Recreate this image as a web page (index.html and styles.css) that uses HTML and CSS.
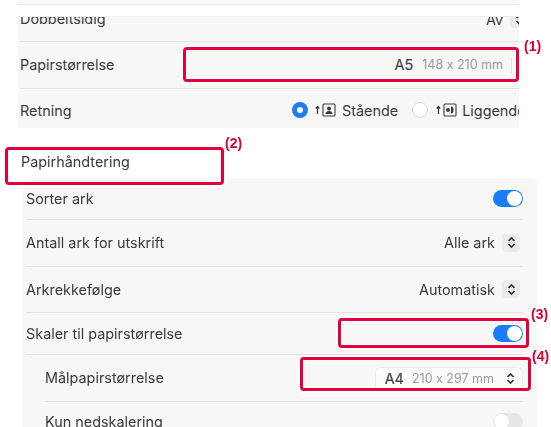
FILE: index.html
```html
<!DOCTYPE html>
<html lang="no">
<head>
  <meta charset="UTF-8" />
  <title>Papirstørrelse</title>
  <link rel="stylesheet" href="styles.css">
</head>
<body>
  <div class="page">
    <div class="strip"></div>

    <!-- Papir -->
    <div class="panel panel-top">
      <div class="row row-clip">
        <span class="cut">Dobbeltsidig</span>
        <span class="value cut cut-value">Av <span class="stepper"><svg width="9" height="13" viewBox="0 0 9 13"><path d="M1.500 5 4.500 2 7.500 5M1.500 8 4.500 11 7.500 8"/></svg></span></span>
      </div>
      <div class="row row-paper">
        <span>Papirstørrelse</span>
        <span class="value"><span class="size">A5</span><span class="dim">148 x 210 mm</span><i class="tick"></i></span>
      </div>
      <div class="row row-dir">
        <span>Retning</span>
        <span class="choices">
          <i class="radio on"></i>
          <svg class="orient" width="21" height="14" viewBox="0 0 21 14"><path class="arr" d="M2.500 11V4M.8 5.500 2.500 3.500 4.200 5.500"/><rect x="8" y="1" width="12" height="12" rx="1"/><circle class="fill" cx="14" cy="5.500" r="2"/><path class="fill" d="M10.500 11c0-2 1.500-3 3.500-3s3.500 1 3.500 3z"/></svg>
          <span class="choice">Stående</span>
          <i class="radio"></i>
          <svg class="orient orient-2" width="21" height="14" viewBox="0 0 21 14"><path class="arr" d="M2.500 11V4M.8 5.500 2.500 3.500 4.200 5.500"/><rect x="8" y="1" width="12" height="12" rx="1"/><circle class="fill" cx="12" cy="7" r="2"/><path class="fill" d="M15 3.500c2 0 2.500 1.500 2.500 3.500s-.5 3.500-2.500 3.500z"/></svg>
          <span class="choice choice-2">Liggende</span>
        </span>
      </div>
    </div>

    <h2 class="heading">Papirhåndtering</h2>

    <!-- Papirhåndtering -->
    <div class="panel panel-main">
      <div class="row row-a">
        <span>Sorter ark</span>
        <i class="toggle on"></i>
      </div>
      <div class="row row-b">
        <span>Antall ark for utskrift</span>
        <span class="value">Alle ark <span class="stepper"><svg width="9" height="13" viewBox="0 0 9 13"><path d="M1.500 5 4.500 2 7.500 5M1.500 8 4.500 11 7.500 8"/></svg></span></span>
      </div>
      <div class="row row-b row-short">
        <span>Arkrekkefølge</span>
        <span class="value">Automatisk <span class="stepper"><svg width="9" height="13" viewBox="0 0 9 13"><path d="M1.500 5 4.500 2 7.500 5M1.500 8 4.500 11 7.500 8"/></svg></span></span>
      </div>
      <div class="row row-c">
        <span>Skaler til papirstørrelse</span>
        <i class="toggle on"></i>
      </div>
      <div class="row row-b row-sub">
        <span>Målpapirstørrelse</span>
        <span class="value select"><span class="size">A4</span><span class="dim">210 x 297 mm</span><svg width="9" height="13" viewBox="0 0 9 13"><path d="M1.500 5 4.500 2 7.500 5M1.500 8 4.500 11 7.500 8"/></svg></span>
      </div>
      <div class="row row-b row-sub row-last">
        <span>Kun nedskalering</span>
        <i class="toggle"></i>
      </div>
    </div>

    <!-- Markeringer -->
    <div class="mark mark-1"></div>
    <div class="mark mark-2"></div>
    <div class="mark mark-3"></div>
    <div class="mark mark-4"></div>
    <span class="num num-1">(1)</span>
    <span class="num num-2">(2)</span>
    <span class="num num-3">(3)</span>
    <span class="num num-4">(4)</span>
  </div>
</body>
</html>
```
FILE: styles.css
```css
html, body { margin: 0; padding: 0; background: #fff; }
body { font-family: Inter, 'Liberation Sans', sans-serif; font-size: 14.4px; color: #3a3a3a; }
.page { position: relative; width: 551px; height: 427px; overflow: hidden; filter: blur(0.35px); }

.strip { height: 4px; margin-left: 18px; width: 501px; background: #f8f8f8; border-bottom: 1px solid #ececec; }

.panel { background: #f7f7f7; overflow: hidden; }
.panel-top { margin: 11px 0 0 18px; width: 501px; height: 112px; border-top: 1px solid #eeeeee; box-sizing: border-box; padding-left: 2px; }
.panel-main { position: absolute; left: 22px; top: 178px; width: 515px; height: 260px; border-radius: 5px 5px 0 0; padding: 0 14px 0 4px; box-sizing: border-box; }

.row { display: flex; justify-content: space-between; align-items: center; border-bottom: 1px solid #e3e3e3; box-sizing: border-box; }
.row-clip { height: 25px; align-items: flex-start; }
.cut { margin-top: -7px; }
.cut-value { margin-right: -12px; }
.row-paper { height: 47px; padding-bottom: 1px; }
.row-dir { height: 42px; border-bottom: none; }
.row-a { height: 42px; }
.row-b { height: 47px; padding-bottom: 1px; }
.row-short { height: 46px; }
.row-c { height: 42px; }
.row-sub { margin-left: 19px; padding-bottom: 2px; }
.row-last { border-bottom: none; padding-bottom: 8px; }

.value { display: flex; align-items: center; gap: 7px; }
.size { color: #444; -webkit-text-stroke: 0.2px #444; }
.dim { font-size: 12.5px; color: #9a9a9a; margin-left: 2px; font-feature-settings: "calt" 0; }
.tick { width: 1px; height: 16px; background: #e4e4e4; margin: 0 7px 0 1px; }

.stepper { display: inline-flex; align-items: center; justify-content: center; width: 18px; height: 18px; background: #ebebeb; border-radius: 4px; margin-right: 3px; }
svg path { fill: none; stroke: #333; stroke-width: 1.7; }
.select { background: #fbfbfb; border: 1px solid #ececec; border-bottom: none; border-radius: 6px 6px 0 0; height: 20px; padding: 0 7px 0 9px; margin-top: 1px; gap: 6px; }
.select .dim { margin-right: 6px; }

.choices { display: flex; align-items: center; flex: none; width: 227px; }
.radio { flex: none; width: 16px; height: 16px; border: 1px solid #d8d8d8; border-radius: 50%; background: #fff; box-sizing: border-box; }
.radio.on { border: 5px solid #1c7cf6; }
.orient { flex: none; margin-left: 7px; }
.orient-2 { margin-left: 8px; }
.orient rect { fill: none; stroke: #3c3c3c; stroke-width: 1.1; }
.orient .arr { stroke-width: 1.2; }
.orient .fill { fill: #3c3c3c; stroke: none; }
.choice { flex: none; margin: 0 14px 0 6px; white-space: nowrap; }
.choice-2 { margin: 0 0 0 5px; }

.toggle { position: relative; width: 30px; height: 17px; border-radius: 9px; background: #e6e6e6; }
.toggle::after { content: ""; position: absolute; left: 1px; top: 1px; width: 15px; height: 15px; background: #fff; border-radius: 50%; }
.toggle.on { background: #1c7cf6; }
.toggle.on::after { left: auto; right: 1px; }

.heading { margin: 25px 0 0 21px; font-size: 14.4px; font-weight: 400; }

.mark { position: absolute; border: 3px solid #e4003a; border-radius: 4px; box-shadow: 0 0 0 2px #fff, inset 0 0 0 1px #fff; box-sizing: border-box; }
.mark-1 { left: 183px; top: 47px; width: 336px; height: 35px; }
.mark-2 { left: 5px; top: 147px; width: 219px; height: 38px; }
.mark-3 { left: 338px; top: 318px; width: 191px; height: 30px; }
.mark-4 { left: 300px; top: 357px; width: 231px; height: 34px; }
.num { position: absolute; font-family: 'Liberation Sans', sans-serif; font-weight: 700; font-size: 14px; color: #d8002f; }
.num-1 { left: 524px; top: 38px; }
.num-2 { left: 225px; top: 135px; }
.num-3 { left: 531px; top: 306px; }
.num-4 { left: 532px; top: 348px; }
```
